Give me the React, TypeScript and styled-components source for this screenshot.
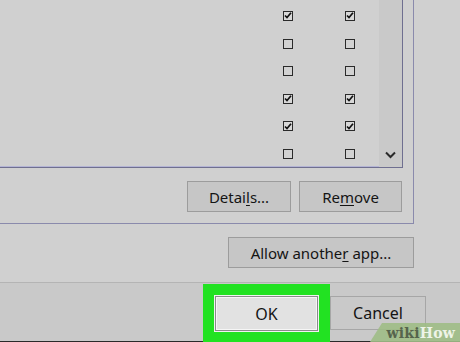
import React from "react";
import styled, { createGlobalStyle } from "styled-components";

const Global = createGlobalStyle`
  html, body { margin: 0; padding: 0; }
  body {
    width: 460px;
    height: 342px;
    overflow: hidden;
    background: #d0d0d0;
    font-family: "Noto Sans", "Open Sans", sans-serif;
    color: #111;
  }
`;

const Page = styled.div`
  position: relative;
  width: 460px;
  height: 342px;
  display: flex;
  flex-direction: column;
  background: #d0d0d0;
  overflow: hidden;
`;

const Upper = styled.div`
  display: flex;
  flex-direction: column;
  padding-right: 46px;
`;

const GroupBox = styled.div`
  width: 414px;
  height: 224px;
  box-sizing: border-box;
  border-right: 1px solid #8a8aac;
  border-bottom: 1px solid #8a8aac;
  padding-right: 10px;
  display: flex;
  flex-direction: column;
`;

const ListBox = styled.div`
  height: 168px;
  box-sizing: border-box;
  display: flex;
  border-right: 1px solid #6f6f90;
  border-bottom: 1px solid #6f6f90;
  box-shadow: inset -1px -1px 0 #b4b4d4;
`;

const Rows = styled.div`
  flex: 1;
  display: grid;
  grid-auto-rows: 27.6px;
  padding-top: 2.2px;
`;

const Row = styled.div`
  display: flex;
  justify-content: flex-end;
  align-items: center;
  gap: 52px;
  padding-right: 24px;
`;

const Box = styled.span<{ $checked: boolean }>`
  width: 10px;
  height: 10px;
  box-sizing: border-box;
  border: 1.5px solid #2a2a2a;
  background: ${(p) => (p.$checked ? "#d8d8d8" : "#d2d2d2")};
  display: flex;
  align-items: center;
  justify-content: center;
`;

const ScrollBar = styled.div`
  width: 23px;
  background: #c9c9c9;
  display: flex;
  align-items: flex-end;
  justify-content: center;
  padding-bottom: 8px;
  box-sizing: border-box;
`;

const ButtonRow = styled.div`
  display: flex;
  justify-content: flex-end;
  gap: 8px;
  margin-top: 13px;
  padding-right: 1px;
`;

const Button = styled.button<{ $w: number; $h?: number }>`
  width: ${(p) => p.$w}px;
  height: ${(p) => p.$h ?? 31}px;
  box-sizing: border-box;
  border: 1px solid #9c9c9c;
  background: #c6c6c6;
  font-family: "Noto Sans", "Open Sans", sans-serif;
  font-size: 15px;
  color: #141414;
  padding: 0;
  display: flex;
  align-items: center;
  justify-content: center;
  u { text-decoration-thickness: 1px; text-underline-offset: 2px; }
`;

const Label = styled.span`
  white-space: pre;
`;

const AllowRow = styled.div`
  display: flex;
  justify-content: flex-end;
  margin-top: 13px;
`;

const Bottom = styled.div`
  margin-top: 14px;
  flex: 1;
  background: #c9c9c9;
  border-top: 1px solid #b4b4b4;
  border-bottom: 1px solid #2a2a2a;
  display: flex;
  justify-content: flex-end;
  align-items: flex-start;
  padding: 12px 34px 0 0;
  gap: 12px;
`;

const OkButton = styled(Button)`
  background: #e2e2e2;
  border: 1px solid #8a8a8a;
  box-shadow: inset 0 0 0 1px #f6f6f6, 0 0 0 1px #f2f2f2, 0 0 0 12px #22e222;
  margin-top: 1px;
  font-size: 16px;
`;

const CancelButton = styled(Button)`
  background: #c9c9c9;
  border: 1px solid #a6a6a6;
  margin-top: 1px;
  font-size: 16px;
`;

const Watermark = styled.div`
  position: absolute;
  right: 0;
  bottom: 0;
  width: 90px;
  height: 19px;
  background: rgba(158, 188, 134, 0.9);
  clip-path: polygon(12px 0, 100% 0, 100% 100%, 0 100%);
  display: flex;
  align-items: center;
  justify-content: flex-end;
  padding-right: 5px;
  box-sizing: border-box;
  font-family: "DejaVu Serif", "Liberation Serif", serif;
  font-weight: bold;
  font-size: 14px;
  letter-spacing: 0.2px;
`;

const Wiki = styled.span`
  color: #56644c;
`;

const How = styled.span`
  color: #eef4e8;
`;

const Check = () => (
  <svg width="8" height="7" viewBox="0 0 8 7">
    <path d="M1 3.5 L3 5.5 L7 0.8" fill="none" stroke="#111" strokeWidth="1.7" />
  </svg>
);

const rows = [true, false, false, true, true, false];

export default function App() {
  return (
    <Page>
      <Global />
      <Upper>
        <GroupBox>
          <ListBox>
            <Rows>
              {rows.map((c, i) => (
                <Row key={i}>
                  <Box $checked={c}>{c && <Check />}</Box>
                  <Box $checked={c}>{c && <Check />}</Box>
                </Row>
              ))}
            </Rows>
            <ScrollBar>
              <svg width="11" height="8" viewBox="0 0 11 8">
                <path d="M1 1.5 L5.5 6 L10 1.5" fill="none" stroke="#2a2a2a" strokeWidth="2" />
              </svg>
            </ScrollBar>
          </ListBox>
          <ButtonRow>
            <Button $w={104}>
              <Label>
                Detai<u>l</u>s...
              </Label>
            </Button>
            <Button $w={103}>
              <Label>
                Re<u>m</u>ove
              </Label>
            </Button>
          </ButtonRow>
        </GroupBox>
        <AllowRow>
          <Button $w={186} $h={31}>
            <Label>
              Allow anothe<u>r</u> app...
            </Label>
          </Button>
        </AllowRow>
      </Upper>
      <Bottom>
        <OkButton $w={103} $h={35}>OK</OkButton>
        <CancelButton $w={96} $h={34}>Cancel</CancelButton>
      </Bottom>
      <Watermark>
        <Wiki>wiki</Wiki>
        <How>How</How>
      </Watermark>
    </Page>
  );
}
